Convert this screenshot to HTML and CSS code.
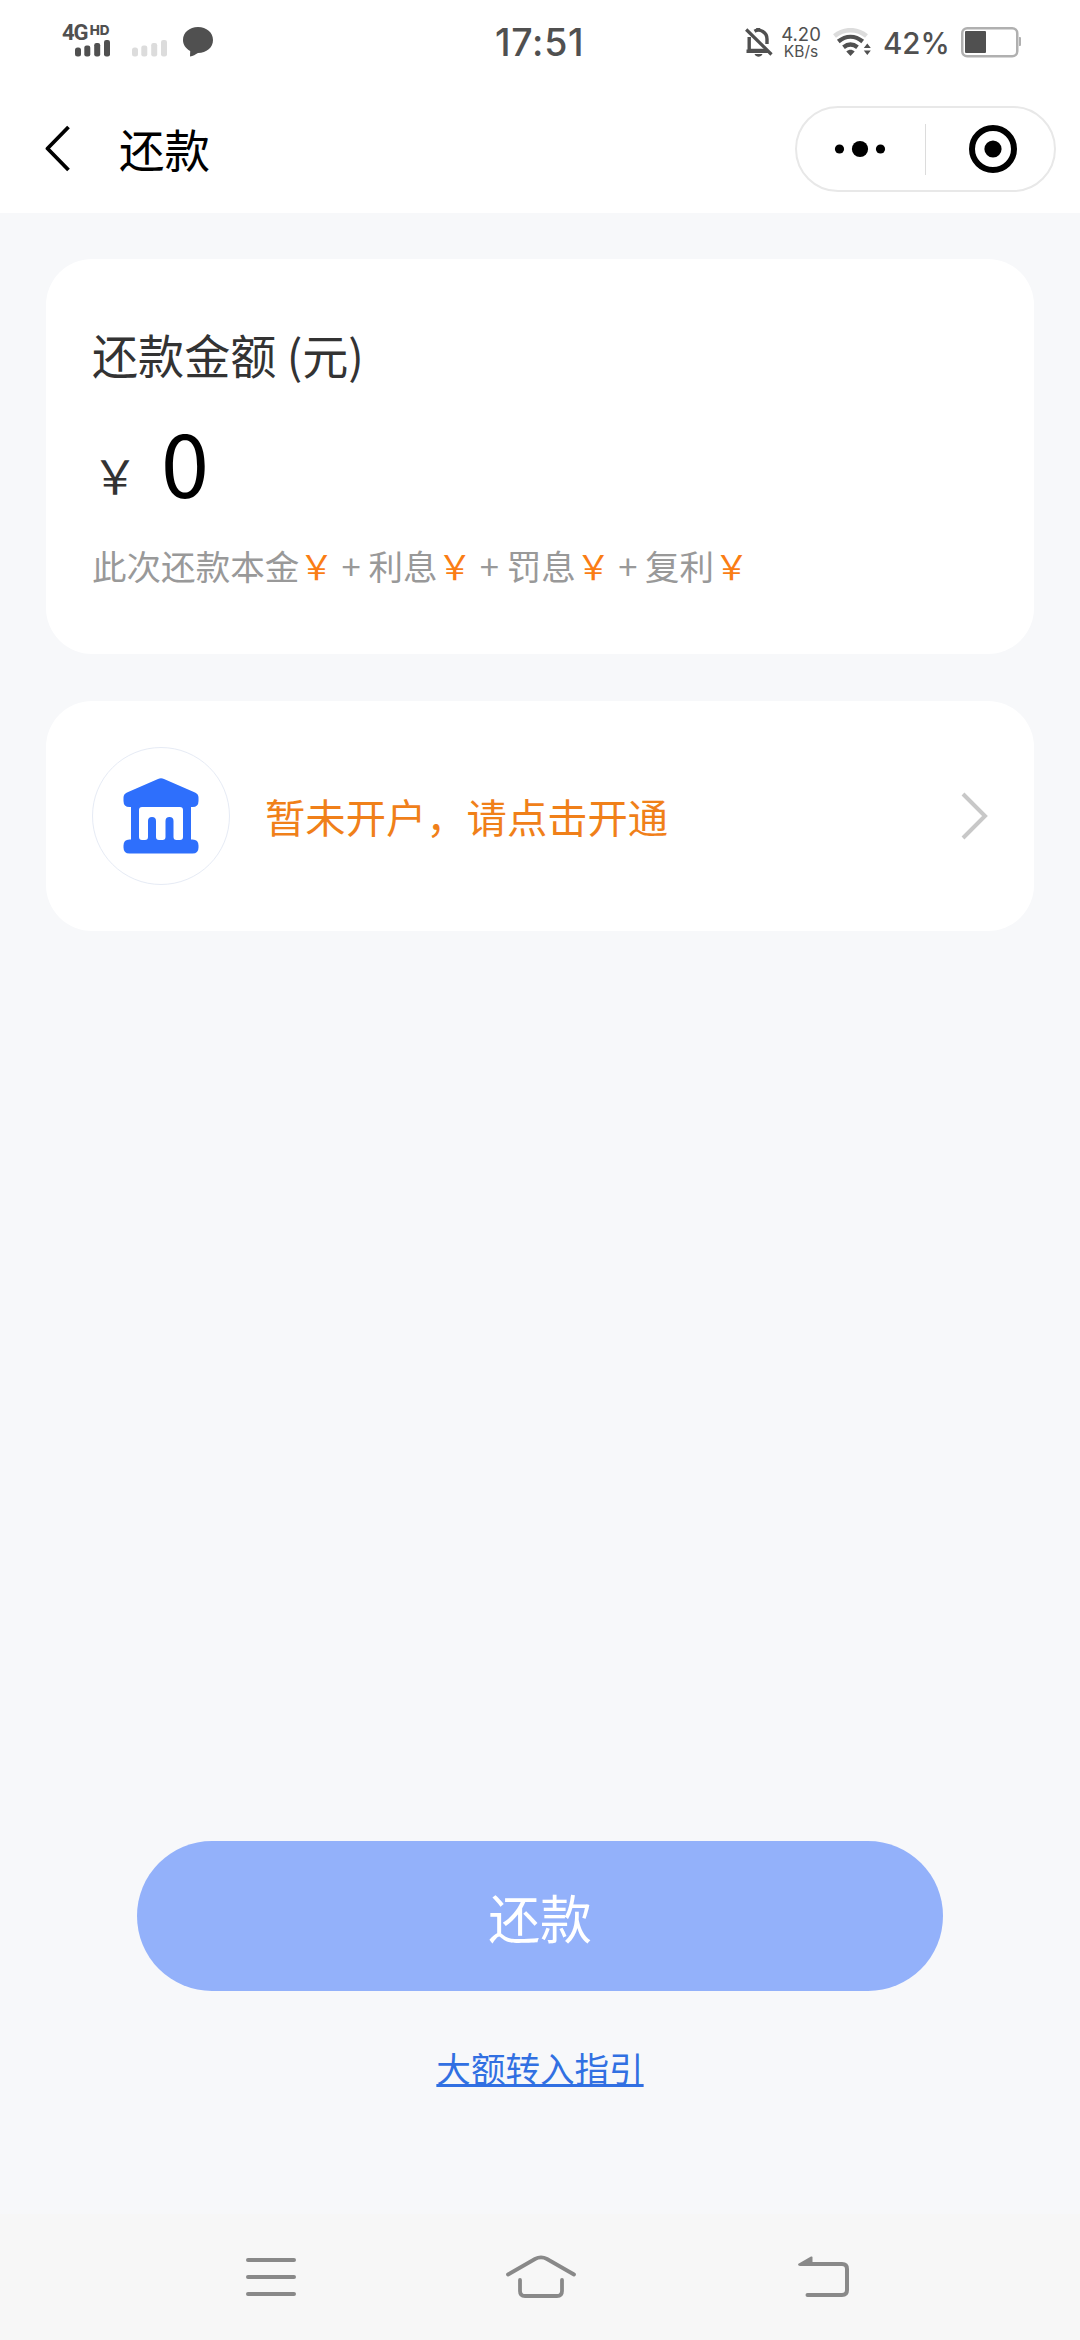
FILE: index.html
```html
<!DOCTYPE html>
<html lang="zh-CN">
<head>
<meta charset="utf-8">
<title>还款</title>
<link rel="stylesheet" href="styles.css">
</head>
<body>
<div class="screen">
  <div class="status">
    <div class="signal">
      <div class="network">4G<span class="hd">HD</span></div>
      <svg class="bars" width="36" height="17" viewBox="0 0 36 17" fill="#505050"><rect x="0" y="7.500" width="6" height="9" rx="2.500"/><rect x="9.300" y="5.500" width="6" height="11" rx="2.200"/><rect x="19.200" y="3" width="6" height="13.500" rx="2.200"/><rect x="29" y="0" width="6" height="16.500" rx="2.200"/></svg>
    </div>
    <svg class="bars-off" width="36" height="17" viewBox="0 0 36 17" fill="#dcdcdc"><rect x="0" y="7.500" width="6" height="9" rx="2.500"/><rect x="9.300" y="5.500" width="6" height="11" rx="2.200"/><rect x="19.200" y="3" width="6" height="13.500" rx="2.200"/><rect x="29" y="0" width="6" height="16.500" rx="2.200"/></svg>
    <svg class="bubble" width="31" height="30" viewBox="0 0 31 30" fill="#505050"><path d="M15 0C23.500 0 30 5.500 30 13S23.500 26 15 26C12.500 27.500 10 29 7 29.500L7.200 24C2.500 21.500 0 17.500 0 13C0 5.500 6.500 0 15 0Z"/></svg>
    <div class="time">17:51</div>
    <svg class="bell" width="29" height="31" viewBox="0 0 29 31" fill="none" stroke="#505050" stroke-width="3.400"><path d="M4.200 10V23.500H21.500M1.500 24.200H23M9.500 4.300C15 1 22 5.500 22 12V17"/><path d="M1.200 2.500L26.500 27.500" stroke-width="3.200"/><path d="M9.500 27H17.500C16 30.500 11 30.500 9.500 27Z" fill="#505050" stroke="none"/><path d="M10 3.300L11.500 1H15L16.500 4" fill="#505050" stroke="none"/></svg>
    <div class="speed"><div class="rate">4.20</div><div class="unit">KB/s</div></div>
    <svg class="wifi" width="39" height="29" viewBox="0 0 39 29" fill="none"><path d="M1.500 8C11 .200 24 .200 33.500 8" stroke="#dcdcdc" stroke-width="4.500"/><path d="M5.300 13.500C13 7.200 22 7.200 29.700 13.500M10.500 19.200C15 15.700 20 15.700 24.500 19.200" stroke="#505050" stroke-width="4.300"/><path d="M13.300 23.500C16 21.200 19 21.200 21.700 23.500L17.500 28ZM34.300 15.500L37.800 20H30.800ZM30.800 22.500H37.800L34.300 27Z" fill="#505050"/></svg>
    <div class="percent">42%</div>
    <svg class="battery" width="61" height="31" viewBox="0 0 61 31"><rect x="1.250" y="1.250" width="55" height="28" rx="5" fill="none" stroke="#b0b0b0" stroke-width="2.500"/><rect x="4" y="4" width="21" height="22" rx="1" fill="#505050"/><path d="M58 10h1q1 0 1 1v7q0 1-1 1h-1z" fill="#b0b0b0"/></svg>
  </div>

  <header class="header">
    <svg class="back" width="26" height="48" viewBox="0 0 26 48" fill="none" stroke="#000" stroke-width="3.800" stroke-linejoin="round"><path d="M23.500 2L2.500 23.500L23.500 45"/></svg>
    <h1 class="title">还款</h1>
    <div class="capsule">
      <svg class="dots" width="52" height="18" viewBox="0 0 52 18"><circle cx="5.500" cy="9" r="4.600"/><circle cx="26" cy="9" r="8.100"/><circle cx="46.500" cy="9" r="4.600"/></svg>
      <span class="divider"></span>
      <svg class="target" width="48" height="48" viewBox="0 0 48 48"><circle cx="24" cy="24" r="21" fill="none" stroke="#000" stroke-width="6"/><circle cx="24" cy="24" r="8.600"/></svg>
    </div>
  </header>

  <main class="content">
    <section class="card amount-card">
      <div class="label">还款金额 (元)</div>
      <div class="amount"><span class="currency">￥</span><span class="value">0</span></div>
      <div class="detail">此次还款本金<span class="yen">￥</span> + 利息<span class="yen">￥</span> + 罚息<span class="yen">￥</span> + 复利<span class="yen">￥</span></div>
    </section>

    <section class="card account-card">
      <div class="bank">
        <svg width="76" height="76" viewBox="0 0 76 76"><path fill="#2e6ffc" fill-rule="evenodd" d="M35 1Q38 -.500 41 1L72 14.500Q75.500 16 75.500 19.500V23Q75.500 29 69.500 29H68V61.500H69.500Q75.500 61.500 75.500 67.500V69.500Q75.500 75.500 69.500 75.500H6.500Q.500 75.500 .500 69.500V67.500Q.500 61.500 6.500 61.500H8V29H6.500Q.500 29 .500 23V19.500Q.500 16 4 14.500ZM19 29Q16 29 16 32V59Q16 62 19 62H22Q25 62 25 59V43Q25 39 29 39T33 43V59Q33 62 36 62H39.500Q42.500 62 42.500 59V43Q42.500 39 46.500 39T50.500 43V59Q50.500 62 53.500 62H57Q60 62 60 59V32Q60 29 57 29Z"/></svg>
      </div>
      <div class="notice">暂未开户，请点击开通</div>
      <svg class="arrow" width="27" height="48" viewBox="0 0 27 48" fill="none" stroke="#c8c8c8" stroke-width="4"><path d="M2 2L24 24L2 46"/></svg>
    </section>

    <div class="actions">
      <button class="submit">还款</button>
      <a class="guide">大额转入指引</a>
    </div>
  </main>

  <nav class="navbar">
    <svg width="50" height="40" viewBox="0 0 50 40" fill="none" stroke="#898989" stroke-width="4" stroke-linecap="round"><path d="M2 3H48M2 20H48M2 37H48"/></svg>
    <svg class="home" width="70" height="44" viewBox="0 0 70 44" fill="none" stroke="#898989" stroke-width="3.800" stroke-linecap="round"><path d="M2 19.500L29 4Q35 .800 41 4L68 19.500M14 25V36Q14 41 19 41H51Q56 41 56 36V25"/></svg>
    <svg width="51" height="42" viewBox="0 0 51 42" fill="none" stroke="#898989" stroke-width="4" stroke-linecap="round"><path d="M12 8H44Q49 8 49 13V34Q49 39 44 39H9.500"/><path d="M0 8L13 .500Q14.500 0 14.500 1.500V10H2Q0 10 0 8Z" fill="#898989" stroke="none"/></svg>
  </nav>
</div>
</body>
</html>
```

FILE: styles.css
```css
* { box-sizing: border-box; margin: 0; padding: 0; }

body {
  background: #f7f8fa;
  font-family: "Noto Sans CJK SC", "Noto Sans", sans-serif;
}

svg { display: block; flex: none; }

.screen {
  width: 1080px;
  height: 2340px;
  display: flex;
  flex-direction: column;
}

/* status bar */
.status {
  height: 90px;
  background: #fff;
  display: flex;
  align-items: flex-start;
  padding-left: 62px;
  color: #505050;
  font-family: Inter, sans-serif;
  white-space: nowrap;
}
.signal { width: 70px; padding-top: 24px; }
.network { height: 16px; font-family: Roboto, sans-serif; font-size: 22px; line-height: 17px; font-weight: 700; letter-spacing: -1px; display: flex; }
.hd { font-family: Inter, sans-serif; font-size: 13.500px; line-height: 12px; font-weight: 800; letter-spacing: 0; margin-left: 2px; }
.signal .bars { margin-left: 13px; }
.bars-off { margin-top: 40px; }
.bubble { margin: 27px 0 0 15px; }
.time { width: 92px; margin: 20px 0 0 281px; font-size: 37.500px; line-height: 46px; font-weight: 500; letter-spacing: 0.7px; }
.bell { margin: 27px 0 0 158px; }
.speed { width: 40px; margin: 26px 0 0 7px; text-align: center; }
.rate { font-size: 18.500px; line-height: 17px; height: 17px; }
.unit { font-size: 15.500px; line-height: 17px; }
.wifi { margin: 28px 0 0 12px; }
.percent { width: 68px; margin: 24px 0 0 11px; font-size: 29.500px; line-height: 38px; font-weight: 500; }
.battery { margin: 27px 0 0 10px; }

/* page header */
.header {
  height: 123px;
  padding: 16px 24px 0 45px;
  background: #fff;
  display: flex;
  align-items: flex-start;
}
.back { margin-top: 19px; }
.title { margin: 9px 0 0 48px; font-size: 45.500px; line-height: 66px; font-weight: 400; color: #000; }
.capsule {
  width: 261px;
  height: 86px;
  margin-left: auto;
  border: 2px solid #e8e8e8;
  border-radius: 43px;
  display: flex;
  align-items: center;
}
.dots { margin-left: 37px; }
.divider { width: 1px; height: 51px; margin-left: 39px; background: #dcdcdc; }
.target { margin-left: 43px; }

/* cards */
.content { flex: 1; padding: 46px 46px 0; display: flex; flex-direction: column; gap: 47px; }
.card { background: #fff; border-radius: 46px; padding: 0 46px; }
.amount-card { height: 395px; padding-top: 62px; }
.label { font-size: 46.080px; line-height: 66px; color: #333; }
.amount { height: 104px; margin-top: 22px; display: flex; align-items: flex-start; }
.currency { font-size: 46.080px; line-height: 66px; padding-top: 32px; color: #333; }
.value { font-size: 86.400px; line-height: 104px; margin-left: 23px; color: #000; }
.detail { margin-top: 27px; font-size: 34.560px; line-height: 50px; color: #999; white-space: nowrap; }
.yen { color: #fa7d14; }

.account-card { height: 230px; display: flex; align-items: center; }
.bank {
  width: 138px;
  height: 138px;
  border: 1px solid #e6ebf5;
  border-radius: 50%;
  display: flex;
  align-items: center;
  justify-content: center;
}
.notice { margin-left: 35px; font-size: 40.320px; line-height: 58px; color: #f08019; }
.arrow { margin-left: auto; }

/* actions */
.actions { margin: auto 0 122px; display: flex; flex-direction: column; align-items: center; }
.submit {
  width: 806px;
  height: 150px;
  border: 0;
  border-radius: 75px;
  background: #93b1fa;
  color: #fff;
  font: inherit;
  font-size: 51.840px;
}
.guide {
  margin-top: 51px;
  font-size: 34.560px;
  line-height: 50px;
  color: #3170e2;
  text-decoration: underline;
  text-decoration-thickness: 3px;
  text-underline-offset: 2px;
  text-decoration-skip-ink: none;
}

/* system navigation */
.navbar {
  height: 126px;
  padding-left: 246px;
  background: #f7f7f7;
  display: flex;
  align-items: center;
}
.home { margin: 0 222px 0 210px; }
```
